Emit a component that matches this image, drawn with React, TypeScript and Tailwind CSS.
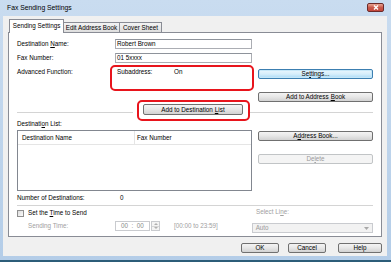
import React from 'react';

type Variant = 'normal' | 'focus' | 'disabled';

const variants: Record<Variant, string> = {
  normal: 'border-[#707070] bg-gradient-to-b from-[#f4f4f4] via-[#e6e6e6] to-[#d2d2d2] text-black',
  focus:
    'border-[#3c7fb1] bg-gradient-to-b from-[#eaf6fd] via-[#d6eefb] to-[#a9daf6] text-black shadow-[inset_0_0_0_1px_#c6e7f8]',
  disabled: 'border-[#c1c4c6] bg-[#f4f4f4] text-[#9a9a9a]',
};

function Button({
  children,
  className = '',
  variant = 'normal',
}: {
  children: React.ReactNode;
  className?: string;
  variant?: Variant;
}) {
  return (
    <div className={`flex items-center justify-center rounded-[2px] border ${variants[variant]} ${className}`}>
      {children}
    </div>
  );
}

function TextBox({ children }: { children: React.ReactNode }) {
  return (
    <div className="flex h-[10px] w-[137px] items-center border border-[#abadb3] border-t-[#8e939b] bg-white pl-[1px]">
      {children}
    </div>
  );
}

export default function App() {
  return (
    <div className="flex h-[262px] w-[391px] flex-col border-b-2 border-[#2c5d79] bg-gradient-to-b from-[#c9dcf0] to-[#b4cde8] font-['Liberation_Sans',Arial,sans-serif] text-[6.3px] leading-[8px] text-black">
      {/* title bar */}
      <div className="flex h-[16px] items-center justify-between pl-[7px] pr-[7px]">
        <span className="text-[6.8px]">Fax Sending Settings</span>
        <div className="mt-[-2px] flex h-[9px] w-[17px] items-center justify-center rounded-[2px] border border-[#6b2a2a] bg-gradient-to-b from-[#e8a493] via-[#c95a4c] to-[#c4443a]">
          <svg width="6" height="5" viewBox="0 0 6 5">
            <path d="M1 0.5 L5 4.5 M5 0.5 L1 4.5" stroke="#fff" strokeWidth="1.4" />
          </svg>
        </div>
      </div>

      {/* client area */}
      <div className="ml-[3px] mr-[4px] flex h-[240px] flex-col bg-[#f0f0f0]">
        {/* tabs */}
        <div className="ml-[6px] mt-[3px] flex h-[13px] items-end">
          <div className="relative z-10 -mb-px flex h-[14px] w-[55px] items-center justify-center border border-b-0 border-[#898c95] bg-white pb-[1px]">
            Sending Settings
          </div>
          <div className="-ml-px flex h-[10px] w-[57px] items-center justify-center border border-b-0 border-[#898c95] bg-gradient-to-b from-[#f3f3f3] to-[#dedede]">
            Edit Address Book
          </div>
          <div className="-ml-px flex h-[10px] w-[43px] items-center justify-center border border-b-0 border-[#898c95] bg-gradient-to-b from-[#f3f3f3] to-[#dedede]">
            Cover Sheet
          </div>
        </div>

        {/* tab panel */}
        <div className="ml-[5px] h-[205px] w-[374px] border border-[#898c95] bg-white pl-[8px]">
          <div className="flex w-[356px] flex-col">
            {/* destination name */}
            <div className="mt-[6px] flex h-[10px] items-center">
              <div className="w-[98px]">
                Destination <u>N</u>ame:
              </div>
              <TextBox>Robert Brown</TextBox>
            </div>

            {/* fax number */}
            <div className="mt-[4px] flex h-[10px] items-center">
              <div className="w-[98px]">Fax Number:</div>
              <TextBox>01 5xxxx</TextBox>
            </div>

            {/* advanced function */}
            <div className="mt-[2px] flex items-start">
              <div className="mt-[3px] w-[93px]">Advanced Function:</div>
              <div className="flex h-[26px] w-[144px] rounded-[5px] border-2 border-[#e8141c] pl-[5px] pt-[1px]">
                <span className="w-[57px]">Subaddress:</span>
                <span>On</span>
              </div>
              <div className="ml-[4px] flex w-[115px] flex-col">
                <Button variant="focus" className="mt-[4px] h-[10px]">
                  Se<u>t</u>tings...
                </Button>
                <Button className="mt-[13px] h-[10px]">
                  Add to Address<u className="ml-[2px]">B</u>ook
                </Button>
              </div>
            </div>

            {/* add to destination list */}
            <div className="mt-[-2px] flex items-start">
              <div className="mt-[12px] h-px w-[116px] bg-[#d4d4d4]" />
              <div className="ml-[4px] h-[21px] w-[113px] rounded-[5px] border-2 border-[#e8141c] pl-[4px] pt-[2px]">
                <Button className="h-[11px] w-[100px]">
                  Add to Destination<u className="ml-[2px]">L</u>ist
                </Button>
              </div>
              <div className="mt-[12px] h-px flex-1 bg-[#d4d4d4]" />
            </div>

            <div className="mt-[-1px] h-[8px]">
              Destinati<u>o</u>n List:
            </div>

            {/* list */}
            <div className="mt-[2px] flex items-start">
              <div className="h-[61px] w-[235px] border border-[#828790] bg-white">
                <div className="flex h-[14px] items-center border-b border-[#e5e5e5]">
                  <div className="flex h-full w-[117px] items-center border-r border-[#e5e5e5] pl-[4px]">
                    Destination Name
                  </div>
                  <div className="pl-[2px]">Fax Number</div>
                </div>
              </div>
              <div className="ml-[6px] flex w-[115px] flex-col">
                <Button className="mt-[1px] h-[10px]">
                  A<u>d</u>dress Book...
                </Button>
                <Button variant="disabled" className="mt-[13px] h-[10px]">
                  De<u>l</u>ete
                </Button>
              </div>
            </div>

            {/* count */}
            <div className="mt-[3px] flex h-[8px]">
              <div className="w-[103px]">Number of Destinations:</div>
              <div>0</div>
            </div>

            <div className="mt-[3px] h-px w-[356px] bg-[#d4d4d4]" />

            {/* time to send */}
            <div className="mt-[3px] flex h-[8px] items-center">
              <div className="flex w-[239px] items-center">
                <div className="h-[7px] w-[7px] border border-[#8f8f8f] bg-gradient-to-br from-[#dcdcdc] to-[#fbfbfb]" />
                <span className="ml-[4px]">
                  Set the <u>T</u>ime to Send
                </span>
              </div>
              <div className="mt-[-3px] text-[#a0a0a0]">
                Select Li<u>n</u>e:
              </div>
            </div>

            <div className="mt-[4px] flex items-start">
              <div className="flex w-[236px] items-center">
                <div className="w-[98px] pl-[11px] text-[#a0a0a0]">Sending Time:</div>
                <div className="flex h-[10px] w-[35px] items-center justify-center border border-[#c9cbcf] bg-white text-[#8a8a8a]">
                  00&nbsp;&nbsp;:&nbsp;&nbsp;00
                </div>
                <div className="ml-[1px] flex h-[10px] w-[9px] flex-col border border-[#c9cbcf] bg-[#f4f4f4]">
                  <div className="flex flex-1 items-center justify-center border-b border-[#d6d6d6]">
                    <svg width="4" height="2" viewBox="0 0 4 2">
                      <path d="M0 2 L2 0 L4 2 Z" fill="#b0b0b0" />
                    </svg>
                  </div>
                  <div className="flex flex-1 items-center justify-center">
                    <svg width="4" height="2" viewBox="0 0 4 2">
                      <path d="M0 0 L2 2 L4 0 Z" fill="#b0b0b0" />
                    </svg>
                  </div>
                </div>
                <div className="ml-[14px] text-[#a0a0a0]">[00:00 to 23:59]</div>
              </div>
              <div className="mt-[2px] flex h-[10px] w-[122px] items-center justify-between border border-[#c9cbcf] bg-[#f2f2f2] pl-[3px] pr-[3px] text-[#9a9a9a]">
                <span>Auto</span>
                <svg width="5" height="3" viewBox="0 0 5 3">
                  <path d="M0 0 L2.5 3 L5 0 Z" fill="#a8a8a8" />
                </svg>
              </div>
            </div>
          </div>
        </div>

        {/* dialog buttons */}
        <div className="mt-[6px] flex justify-end pr-[5px]">
          <Button className="h-[10px] w-[38px]">OK</Button>
          <Button className="ml-[9px] h-[10px] w-[38px]">Cancel</Button>
          <Button className="ml-[12px] h-[10px] w-[44px]">Help</Button>
        </div>
      </div>

      <div className="flex-1" />
    </div>
  );
}
